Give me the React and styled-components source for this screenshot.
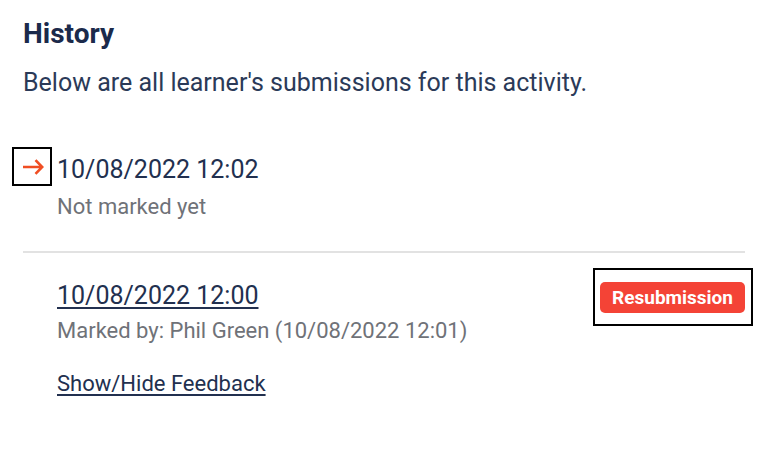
import React from 'react'
import styled, { createGlobalStyle } from 'styled-components'

const GlobalStyle = createGlobalStyle`
  body {
    margin: 0;
    background: #fff;
    font-family: Roboto, "Liberation Sans", sans-serif;
  }
`

const submissions = [
  { id: 1, date: '10/08/2022 12:02', note: 'Not marked yet', current: true },
  {
    id: 2,
    date: '10/08/2022 12:00',
    note: 'Marked by: Phil Green (10/08/2022 12:01)',
    badge: 'Resubmission',
    feedback: true,
  },
]

function Arrow() {
  return (
    <svg width="22" height="16" viewBox="0 0 22 16" fill="none">
      <path d="M1 8H20M13.5 1.2L20.2 8L13.5 14.8" stroke="#f04e23" strokeWidth="2.6" />
    </svg>
  )
}

export default function App() {
  return (
    <Page>
      <GlobalStyle />
      <Title>History</Title>
      <Intro>Below are all learner's submissions for this activity.</Intro>
      <List>
        {submissions.map(item => (
          <Item key={item.id} current={item.current}>
            <Marker>{item.current && <FocusBox><Arrow /></FocusBox>}</Marker>
            <Body>
              <DateText as={item.current ? 'div' : 'a'} href={item.current ? undefined : '#'}>
                {item.date}
              </DateText>
              <Note current={item.current}>{item.note}</Note>
              {item.feedback && <FeedbackLink href="#">Show/Hide Feedback</FeedbackLink>}
            </Body>
            {item.badge && (
              <BadgeFrame>
                <Badge>{item.badge}</Badge>
              </BadgeFrame>
            )}
          </Item>
        ))}
      </List>
    </Page>
  )
}

const Page = styled.div`
  padding: 17px 25px 0 23px;
  color: #22304f;
`
const Title = styled.h2`
  margin: 0;
  font-size: 28px;
  line-height: 34px;
  font-weight: 700;
  color: #1b2a4b;
`
const Intro = styled.p`
  margin: 17px 0 0;
  font-size: 25px;
  line-height: 30px;
  color: #2b3a58;
`
const List = styled.div`
  margin-top: 57px;
  display: flex;
  flex-direction: column;
`
const Item = styled.div`
  display: grid;
  grid-template-columns: 34px 1fr auto;
  align-items: start;
  padding: ${p => (p.current ? '0 0 31px' : '28px 0 0')};
  border-bottom: ${p => (p.current ? '2px solid #e2e2e2' : 'none')};
`
const Marker = styled.div`
  display: flex;
`
const FocusBox = styled.div`
  box-sizing: border-box;
  margin: -8px 0 0 -11px;
  width: 40px;
  height: 39px;
  border: 2px solid #000;
  display: flex;
  align-items: center;
  justify-content: center;
  padding-left: 2px;
`
const Body = styled.div`
  display: flex;
  flex-direction: column;
  align-items: flex-start;
`
const DateText = styled.div`
  font-size: 25px;
  line-height: 30px;
  color: #22304f;
  text-decoration-thickness: 1.5px;
  text-underline-offset: 3px;
`
const Note = styled.div`
  margin-top: ${p => (p.current ? '9px' : '7px')};
  font-size: 22px;
  line-height: 26px;
  color: #6f7278;
`
const FeedbackLink = styled.a`
  margin-top: 27px;
  font-size: 22px;
  line-height: 26px;
  color: #22304f;
  text-decoration-thickness: 1.5px;
  text-underline-offset: 3px;
`
const BadgeFrame = styled.div`
  margin: -13px -8px 0 0;
  border: 2px solid #000;
  padding: 12px 6px 11px 5px;
`
const Badge = styled.span`
  display: block;
  background: #f44336;
  color: #fff;
  font-weight: 700;
  font-size: 19px;
  line-height: 31px;
  padding: 0 12px;
  border-radius: 5px;
`
